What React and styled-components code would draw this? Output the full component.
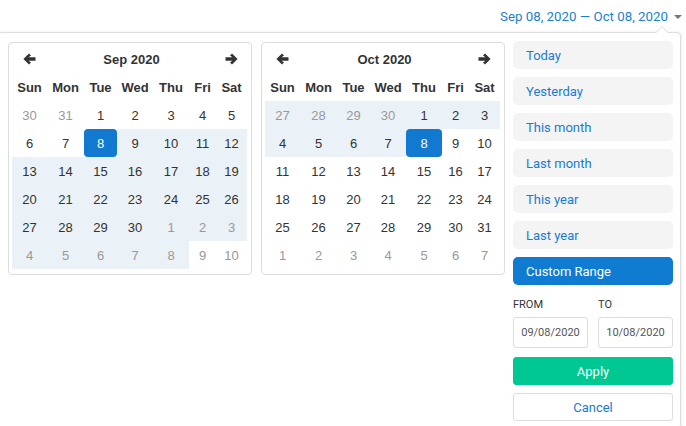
import React from "react";
import styled, { createGlobalStyle } from "styled-components";

const GlobalStyle = createGlobalStyle`
  html, body {
    margin: 0;
    padding: 0;
    background: #fff;
    font-family: "Liberation Sans", Arial, sans-serif;
  }
`;

const Page = styled.div`
  width: 686px;
  height: 426px;
  overflow: hidden;
`;

const TopBar = styled.div`
  height: 32px;
  display: flex;
  justify-content: flex-end;
  align-items: center;
  padding-right: 4px;
  box-sizing: border-box;
`;

const RangeToggle = styled.div`
  display: flex;
  align-items: center;
  gap: 6px;
  font-family: Roboto, "Liberation Sans", sans-serif;
  font-size: 13.3px;
  color: #1a7fd5;
  cursor: pointer;
`;

const Caret = styled.span`
  width: 0;
  height: 0;
  border-left: 4px solid transparent;
  border-right: 4px solid transparent;
  border-top: 4px solid #777;
  margin-top: 1px;
`;

const Dropdown = styled.div`
  position: relative;
  width: 683px;
  margin-left: -2px;
  box-sizing: border-box;
  border: 1px solid #ddd;
  border-radius: 4px;
  box-shadow: 0 1px 4px rgba(0, 0, 0, 0.12);
  background: #fff;
  padding: 8px 7px 7px 9px;
  display: flex;
  align-items: flex-start;

  &::before,
  &::after {
    content: "";
    position: absolute;
    right: 11px;
    width: 0;
    height: 0;
    border-left: 7px solid transparent;
    border-right: 7px solid transparent;
  }
  &::before {
    top: -7px;
    border-bottom: 7px solid #ddd;
  }
  &::after {
    top: -6px;
    border-bottom: 7px solid #fff;
  }
`;

const Calendars = styled.div`
  display: flex;
  gap: 9px;
  margin-top: 1px;
`;

const CalendarBox = styled.div`
  width: 244px;
  box-sizing: border-box;
  border: 1px solid #ddd;
  border-radius: 4px;
  padding: 2px 3px 5px 3px;
`;

const Grid = styled.div`
  display: grid;
  grid-template-columns: 35px 37px 33px 36px 36px 27px 31px;
  grid-auto-rows: 28px;
`;

const NavArrow = styled.div`
  display: flex;
  align-items: center;
  justify-content: center;
  color: #333;
  cursor: pointer;
`;

const MonthTitle = styled.div`
  grid-column: 2 / span 5;
  display: flex;
  align-items: center;
  justify-content: center;
  font-size: 13px;
  font-weight: bold;
  color: #333;
`;

const WeekDay = styled.div`
  display: flex;
  align-items: center;
  justify-content: center;
  font-size: 13px;
  font-weight: bold;
  color: #333;
`;

const Day = styled.div`
  display: flex;
  align-items: center;
  justify-content: center;
  font-size: 13px;
  color: ${(p) => (p.$selected ? "#fff" : p.$off ? "#999" : "#333")};
  background: ${(p) =>
    p.$selected ? "#1179d0" : p.$inRange ? "#eaf1f7" : "transparent"};
  border-radius: ${(p) => (p.$selected ? "4px" : "0")};
  cursor: pointer;
`;

const Side = styled.div`
  width: 160px;
  margin-left: 8px;
  display: flex;
  flex-direction: column;
  font-family: Roboto, "Liberation Sans", sans-serif;
`;

const Presets = styled.div`
  display: flex;
  flex-direction: column;
  gap: 8px;
`;

const Preset = styled.div`
  height: 28px;
  display: flex;
  align-items: center;
  padding-left: 13px;
  border-radius: 5px;
  font-size: 13px;
  background: ${(p) => (p.$active ? "#0f7bd1" : "#f4f4f4")};
  color: ${(p) => (p.$active ? "#fff" : "#1a7bd0")};
  cursor: pointer;
`;

const InputsRow = styled.div`
  display: flex;
  justify-content: space-between;
  margin-top: 13px;
`;

const Field = styled.div`
  display: flex;
  flex-direction: column;
  width: 75px;
`;

const Label = styled.div`
  font-size: 11px;
  color: #333;
  height: 14px;
  line-height: 14px;
  margin-bottom: 5px;
`;

const DateInput = styled.div`
  height: 31px;
  box-sizing: border-box;
  border: 1px solid #ddd;
  border-radius: 3px;
  display: flex;
  align-items: center;
  justify-content: center;
  font-size: 11px;
  color: #555;
`;

const ActionButton = styled.div`
  height: 28px;
  box-sizing: border-box;
  margin-top: ${(p) => p.$top}px;
  display: flex;
  align-items: center;
  justify-content: center;
  border-radius: 3px;
  font-size: 13px;
  background: ${(p) => (p.$primary ? "#00c892" : "#fff")};
  color: ${(p) => (p.$primary ? "#fff" : "#1a7bd0")};
  border: 1px solid ${(p) => (p.$primary ? "#00c892" : "#ddd")};
  cursor: pointer;
`;

const Arrow = ({ dir }) => (
  <svg width="13" height="12" viewBox="0 0 13 12">
    <g transform={dir === "right" ? "translate(13 0) scale(-1 1)" : undefined}>
      <path
        d="M6 0.4 L8 2.4 L5.6 4.3 H12.5 V7.7 H5.6 L8 9.6 L6 11.6 L0.4 6 Z"
        fill="#333"
      />
    </g>
  </svg>
);

const WEEK = ["Sun", "Mon", "Tue", "Wed", "Thu", "Fri", "Sat"];

// days: [label, off, inRange, selected]
const sepDays = [
  [30, 1, 0, 0], [31, 1, 0, 0], [1, 0, 0, 0], [2, 0, 0, 0], [3, 0, 0, 0], [4, 0, 0, 0], [5, 0, 0, 0],
  [6, 0, 0, 0], [7, 0, 0, 0], [8, 0, 1, 1], [9, 0, 1, 0], [10, 0, 1, 0], [11, 0, 1, 0], [12, 0, 1, 0],
  [13, 0, 1, 0], [14, 0, 1, 0], [15, 0, 1, 0], [16, 0, 1, 0], [17, 0, 1, 0], [18, 0, 1, 0], [19, 0, 1, 0],
  [20, 0, 1, 0], [21, 0, 1, 0], [22, 0, 1, 0], [23, 0, 1, 0], [24, 0, 1, 0], [25, 0, 1, 0], [26, 0, 1, 0],
  [27, 0, 1, 0], [28, 0, 1, 0], [29, 0, 1, 0], [30, 0, 1, 0], [1, 1, 1, 0], [2, 1, 1, 0], [3, 1, 1, 0],
  [4, 1, 1, 0], [5, 1, 1, 0], [6, 1, 1, 0], [7, 1, 1, 0], [8, 1, 1, 0], [9, 1, 0, 0], [10, 1, 0, 0],
];

const octDays = [
  [27, 1, 1, 0], [28, 1, 1, 0], [29, 1, 1, 0], [30, 1, 1, 0], [1, 0, 1, 0], [2, 0, 1, 0], [3, 0, 1, 0],
  [4, 0, 1, 0], [5, 0, 1, 0], [6, 0, 1, 0], [7, 0, 1, 0], [8, 0, 1, 1], [9, 0, 0, 0], [10, 0, 0, 0],
  [11, 0, 0, 0], [12, 0, 0, 0], [13, 0, 0, 0], [14, 0, 0, 0], [15, 0, 0, 0], [16, 0, 0, 0], [17, 0, 0, 0],
  [18, 0, 0, 0], [19, 0, 0, 0], [20, 0, 0, 0], [21, 0, 0, 0], [22, 0, 0, 0], [23, 0, 0, 0], [24, 0, 0, 0],
  [25, 0, 0, 0], [26, 0, 0, 0], [27, 0, 0, 0], [28, 0, 0, 0], [29, 0, 0, 0], [30, 0, 0, 0], [31, 0, 0, 0],
  [1, 1, 0, 0], [2, 1, 0, 0], [3, 1, 0, 0], [4, 1, 0, 0], [5, 1, 0, 0], [6, 1, 0, 0], [7, 1, 0, 0],
];

const Calendar = ({ title, days }) => (
  <CalendarBox>
    <Grid>
      <NavArrow>
        <Arrow dir="left" />
      </NavArrow>
      <MonthTitle>{title}</MonthTitle>
      <NavArrow>
        <Arrow dir="right" />
      </NavArrow>
      {WEEK.map((w) => (
        <WeekDay key={w}>{w}</WeekDay>
      ))}
      {days.map(([n, off, inRange, selected], i) => (
        <Day key={i} $off={!!off} $inRange={!!inRange} $selected={!!selected}>
          {n}
        </Day>
      ))}
    </Grid>
  </CalendarBox>
);

const presets = [
  "Today",
  "Yesterday",
  "This month",
  "Last month",
  "This year",
  "Last year",
  "Custom Range",
];

export default function App() {
  return (
    <Page>
      <GlobalStyle />
      <TopBar>
        <RangeToggle>
          Sep 08, 2020 — Oct 08, 2020
          <Caret />
        </RangeToggle>
      </TopBar>
      <Dropdown>
        <Calendars>
          <Calendar title="Sep 2020" days={sepDays} />
          <Calendar title="Oct 2020" days={octDays} />
        </Calendars>
        <Side>
          <Presets>
            {presets.map((p) => (
              <Preset key={p} $active={p === "Custom Range"}>
                {p}
              </Preset>
            ))}
          </Presets>
          <InputsRow>
            <Field>
              <Label>FROM</Label>
              <DateInput>09/08/2020</DateInput>
            </Field>
            <Field>
              <Label>TO</Label>
              <DateInput>10/08/2020</DateInput>
            </Field>
          </InputsRow>
          <ActionButton $primary $top={9}>
            Apply
          </ActionButton>
          <ActionButton $top={8}>Cancel</ActionButton>
        </Side>
      </Dropdown>
    </Page>
  );
}
